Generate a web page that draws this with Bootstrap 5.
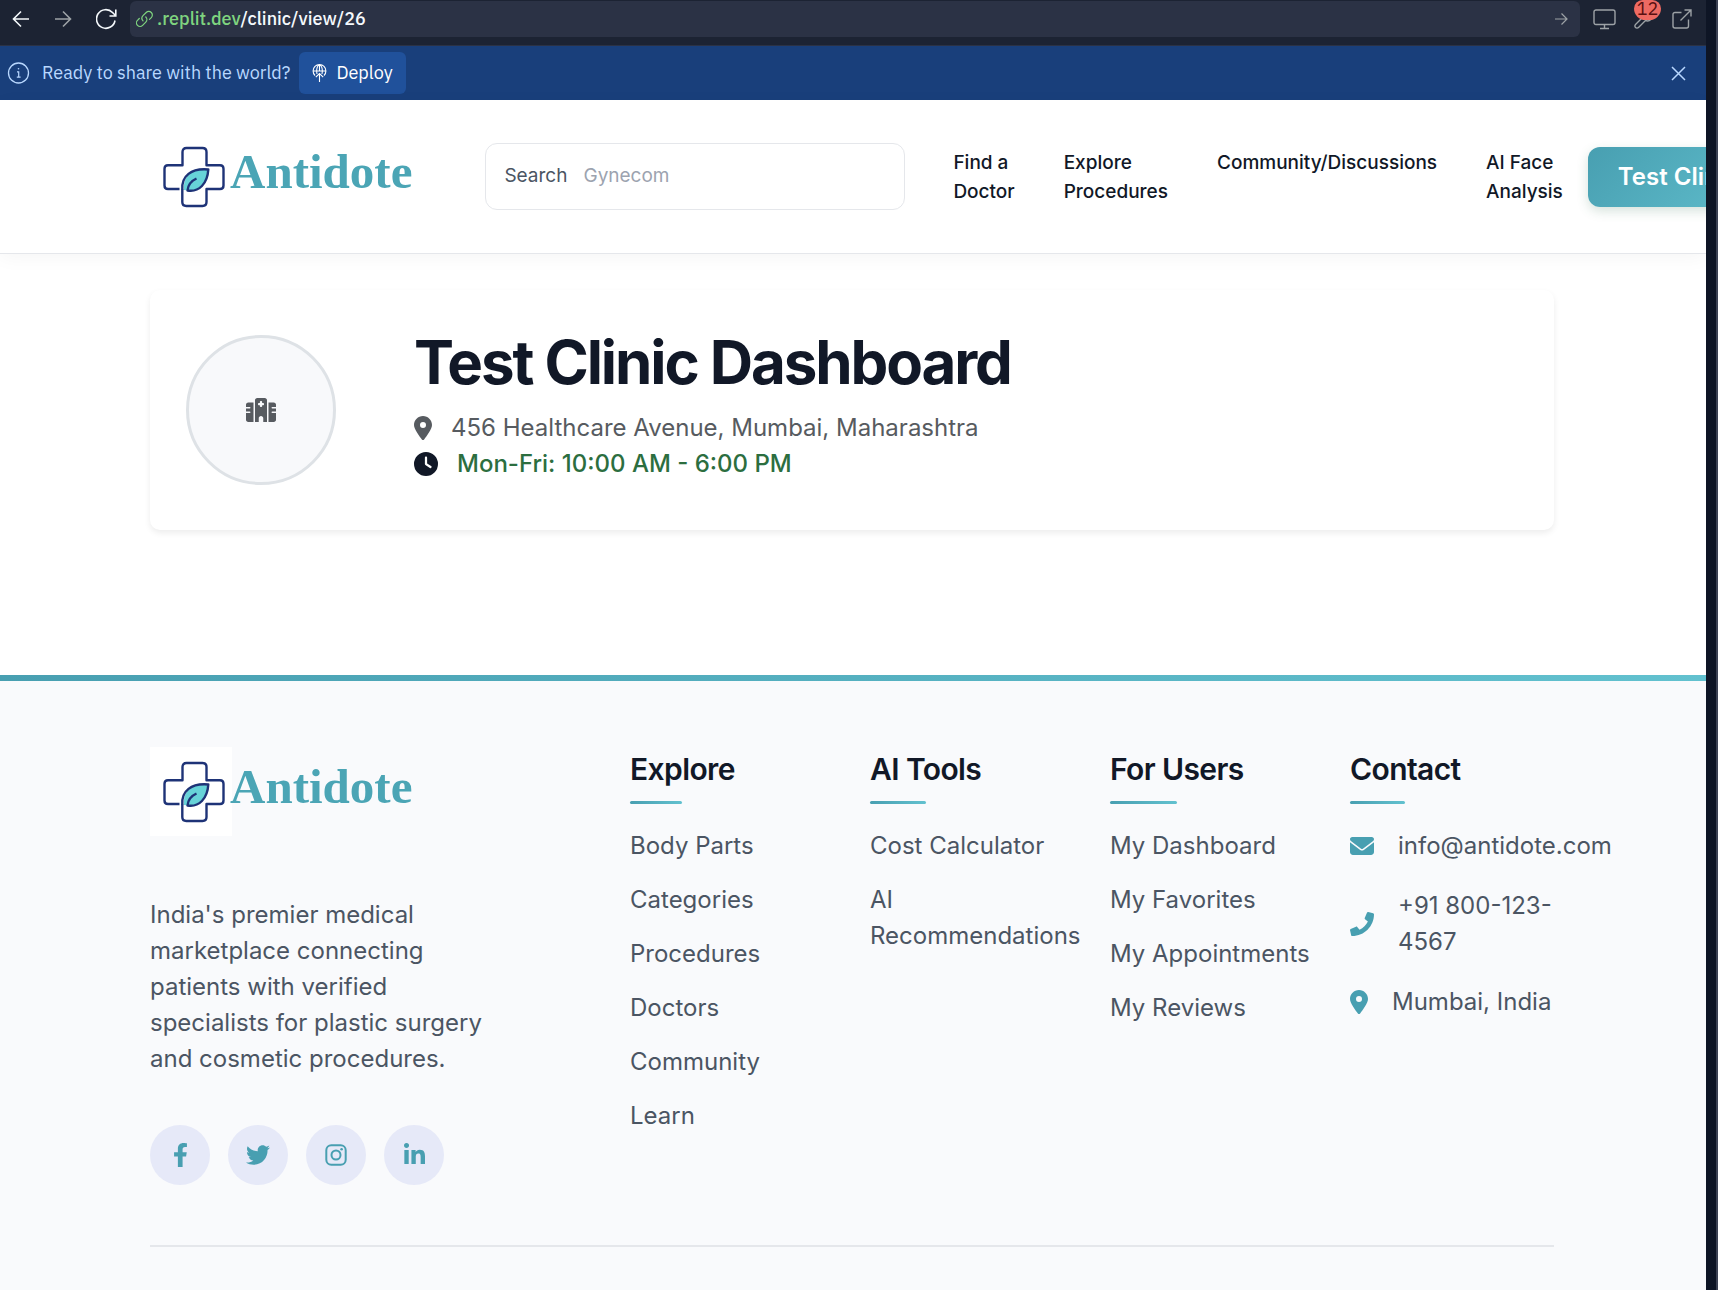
<!DOCTYPE html>
<html lang="en">
<head>
<meta charset="utf-8">
<meta name="viewport" content="width=device-width, initial-scale=1">
<title>Test Clinic Dashboard - Antidote</title>
<link href="https://cdn.jsdelivr.net/npm/bootstrap@5.3.0/dist/css/bootstrap.min.css" rel="stylesheet">
<style>
html{font-size:24px}
body{font-family:Inter,"Liberation Sans",sans-serif;color:#111827;background:#fff;line-height:1.5}
a{text-decoration:none;color:inherit}
svg{display:block;flex-shrink:0}
.pane{min-width:0;overflow-x:clip}
.edge{width:12px;background:#0e1525;border-right:2px solid #3c4254}
/* browser chrome */
.chrome-bar,.deploy-bar{font-family:"IBM Plex Sans","Noto Sans",sans-serif;font-size:18px;line-height:24px}
.chrome-bar{height:46px;background:#1c2333;border-bottom:1px solid #2b3245;padding:1px 14px 8px 12px;color:#f5f9fc}
.icon-btn{background:none;border:0;padding:0;color:inherit;position:relative;display:block}
.history-tools{gap:24px;padding-right:10px}
.page-tools{gap:18px;padding-left:13px}
.dim{color:#9da2a6}
.url-box{height:36px;background:#2b3245;border-radius:6px;padding:0 12px 0 6px;gap:4px;font-weight:500}
.url-host{color:#7fd47f}
.count-badge{position:absolute;left:0;top:-9px;width:27px;height:20px;border-radius:9px 9px 12px 12px;background:#ee6a62;color:#5a1010;font-size:18px;line-height:18px;text-align:center}
.deploy-bar{height:54px;background:#193f7b;color:#b9d8ff;padding:0 20px 0 7px}
.deploy-btn{height:42px;background:#20519b;color:#fff;border:0;border-radius:6px;padding:0 13px;gap:9px;margin-left:9px}
/* site */
.wrap-1440{max-width:1440px}
.site-head{background:#fff;border-bottom:1px solid #e5e7eb;padding:32px 2px 32px 0;box-shadow:0 4px 18px rgba(0,0,0,.04);overflow-x:clip}
.brand{height:89px}
.brand-name{font-family:"Liberation Serif",serif;font-weight:700;font-size:49px;line-height:60px;color:#4ba5b5;padding-bottom:9px;margin-left:-2px}
.brand-mark{background:#fff}
.find-box{width:420px;height:67px;border:1px solid #e5e7eb;border-radius:12px;padding:0 18px;margin-left:73px;font-size:19px;color:#4b5563;gap:16px}
.find-box input{border:0;outline:0;background:none;min-width:0;padding:0;color:#4b5563}
.find-box input::placeholder{color:#9ca3af;opacity:1}
.main-nav{font-size:19px;line-height:29px;font-weight:500;gap:49px;margin-left:48px;white-space:nowrap}
.account-btn{height:60px;border:0;border-radius:12px;background:linear-gradient(135deg,#489fb1,#62c1cf);color:#fff;font-weight:600;padding:0 60px 0 30px;margin-left:25px;box-shadow:0 4px 12px rgba(44,110,73,.2);white-space:nowrap;font-size:24px}
.site-main{padding:36px 2px 145px 0}
.clinic-card{border:0;border-radius:10px;box-shadow:0 3px 6px rgba(0,0,0,.075);background:#fff}
.clinic-photo{width:150px;height:150px;border-radius:50%;border:3px solid #dee2e6;background:#f8f9fb;color:#575b60}
.clinic-title{font-size:60px;line-height:72px;font-weight:700;letter-spacing:-.035em}
.info-line{gap:19px}
.addr{color:#575b60}
.hours{color:#2c6e3f;font-weight:500}
.rule-top{height:6px;background:linear-gradient(90deg,#489fb1,#62c1cf)}
.site-foot{background:#f9fafc;color:#4b5563;padding:66px 2px 36px 0}
.about{margin:61px 0 48px;padding-right:96px}
.social{gap:18px}
.social a{width:60px;height:60px;border-radius:50%;background:#e6e9f8;color:#489fb1}
.foot-title{display:inline-block;font-size:30px;line-height:45px;font-weight:600;letter-spacing:-.02em;color:#111827;padding-bottom:9px;margin-bottom:24px}
.foot-title::after{content:"";display:block;width:50%;height:3px;border-radius:2px;margin-top:9px;margin-bottom:-9px;background:linear-gradient(90deg,#489fb1,#62c1cf)}
.foot-list{gap:18px}
.foot-list.roomy{gap:24px}
.foot-list svg{color:#489fb1}
.foot-end{border-top:2px solid #e5e7eb;margin-top:60px}
</style>
<script src="https://cdn.jsdelivr.net/npm/bootstrap@5.3.0/dist/js/bootstrap.bundle.min.js"></script>
</head>
<body>
<svg width="0" height="0" class="position-absolute" aria-hidden="true">
  <symbol id="logo" viewBox="0 0 82 89">
    <g fill="none" stroke="#1e3377" stroke-width="2.4" stroke-linejoin="round">
      <path d="M29.5 57H18q-3.500 0-3.500-3.500V36.800q0-3.500 3.500-3.500H32.500V20q0-4 4-4H52.500q4 0 4 4V33.300H70q3.500 0 3.500 3.500V53.500q0 3.500-3.500 3.500H56.500V70q0 4-4 4H36.300q-4 0-4-4V57"/>
      <path stroke="none" fill="#67d3d8" d="M34 58C33 45 41 36 58.300 37.500C57 52 49 60 38 58.500Z"/>
      <path d="M32.300 57.500C31.500 44 41 36 58.300 37.500C57.500 51.500 49 60.500 37.500 58.500C38 53 41 49 46.500 46.500"/>
    </g>
  </symbol>
  <symbol id="pin" viewBox="0 0 384 512"><path fill="currentColor" d="M215.700 499.200C267 435 384 279.400 384 192C384 86 298 0 192 0S0 86 0 192c0 87.400 117 243 168.300 307.200c12.300 15.300 35.100 15.300 47.400 0zM192 128a64 64 0 1 1 0 128 64 64 0 1 1 0-128z"/></symbol>
</svg>
<div class="d-flex min-vh-100">
<div class="pane flex-grow-1 d-flex flex-column">

  <div class="chrome-bar d-flex align-items-center">
    <div class="history-tools d-flex align-items-center">
      <button class="icon-btn" aria-label="Back"><svg width="18" height="18" viewBox="0 0 18 18" fill="none" stroke="currentColor" stroke-width="1.600"><path d="M17 9H2M9 1.500 1.500 9 9 16.500"/></svg></button>
      <button class="icon-btn dim" aria-label="Forward"><svg width="18" height="18" viewBox="-1 0 18 18" fill="none" stroke="currentColor" stroke-width="1.600"><path d="M0 9h15M8 1.500 15.500 9 8 16.500"/></svg></button>
      <button class="icon-btn" aria-label="Reload"><svg width="24" height="22" viewBox="2 0 24 22" fill="none" stroke="currentColor" stroke-width="1.600"><path d="M21 12.500A9.300 9.300 0 1 1 18.500 4.500L21.500 7.500M21.800 1.500V8H15.500"/></svg></button>
    </div>
    <div class="url-box d-flex align-items-center flex-grow-1">
      <svg width="17" height="18" viewBox="0 0 17 18" fill="none" stroke="#7fd47f" stroke-width="1.200" stroke-linecap="round"><path d="M7 10.800A3.700 3.700 0 0 1 7 5.700L10.200 2.500A3.600 3.600 0 0 1 15.300 7.600L13.500 9.400M9.800 7A3.700 3.700 0 0 1 9.800 12.200L6.600 15.400A3.600 3.600 0 0 1 1.500 10.300L3.300 8.500"/></svg>
      <div class="flex-grow-1"><span class="url-host">.replit.dev</span>/clinic/view/26</div>
      <svg class="dim" width="14" height="14" viewBox="0 0 14 14" fill="none" stroke="currentColor" stroke-width="1.200"><path d="M1 7h12M7.500 1.500 13 7l-5.500 5.500"/></svg>
    </div>
    <div class="page-tools d-flex dim align-items-center">
      <button class="icon-btn" aria-label="Devices"><svg width="23" height="21" viewBox="0 0 23 21" fill="none" stroke="currentColor" stroke-width="1.400"><rect x="1" y="1" width="21" height="14.500" rx="2"/><path d="M11.500 15.500V19.500M7 19.500h9"/></svg></button>
      <button class="icon-btn" aria-label="Developer tools"><svg width="20" height="20" viewBox="0 0 20 20" fill="none" stroke="currentColor" stroke-width="1.400" stroke-linejoin="round"><path d="M8.500 8.500A5 5 0 0 1 15 2L12.500 5 15 7.500 18 5A5 5 0 0 1 11.500 11.500L4.500 18.500A2 2 0 0 1 1.500 15.500Z"/></svg><span class="count-badge">12</span></button>
      <button class="icon-btn" aria-label="Open in new tab"><svg width="20" height="20" viewBox="0 0 20 20" fill="none" stroke="currentColor" stroke-width="1.400"><path d="M9.500 3.500H3a2 2 0 0 0-2 2V17a2 2 0 0 0 2 2H14.500a2 2 0 0 0 2-2V10.500M8.500 11.500 19 1M12.500 1H19V7.500"/></svg></button>
    </div>
  </div>

  <div class="deploy-bar d-flex align-items-center">
    <svg width="23" height="22" viewBox="0 0 23 22" fill="none" stroke="currentColor" stroke-width="1.300"><circle cx="11.500" cy="11" r="10"/><path d="M10 9.800h1.700V15M9.800 15.200h3.800" stroke-width="1.200"/><circle cx="11.500" cy="6.800" r=".8" fill="currentColor" stroke="none"/></svg>
    <span class="ms-2 ps-0">Ready to share with the world?</span>
    <button class="deploy-btn d-flex align-items-center"><svg width="15" height="18" viewBox="0 0 15 18" fill="none" stroke="currentColor" stroke-width="1.100"><path d="M3 11.500A6.400 6.400 0 1 1 12 11.500M1 7H14M5 10C4 5 5.500 1 7.500 .8C9.500 1 11 5 10 10M7.500 1V7M7.500 18V9.500M3.800 13.200 7.500 9.500 11.200 13.200"/></svg>Deploy</button>
    <button class="icon-btn ms-auto" aria-label="Dismiss"><svg width="15" height="15" viewBox="0 0 15 15" fill="none" stroke="currentColor" stroke-width="1.500"><path d="M1 1 14 14M14 1 1 14"/></svg></button>
  </div>

  <header class="site-head">
    <div class="container-fluid wrap-1440 d-flex align-items-center flex-nowrap">
      <a href="#" class="brand d-flex align-items-center flex-shrink-0">
        <svg class="brand-mark" width="82" height="89"><use href="#logo"/></svg><span class="brand-name">Antidote</span>
      </a>
      <div class="find-box d-flex align-items-center flex-shrink-0">
        <label for="find">Search</label>
        <input id="find" class="flex-grow-1" type="text" placeholder="Gynecom">
      </div>
      <nav class="main-nav d-flex flex-shrink-0">
        <a href="#">Find a<br>Doctor</a>
        <a href="#">Explore<br>Procedures</a>
        <a href="#">Community/Discussions</a>
        <a href="#">AI Face<br>Analysis</a>
      </nav>
      <button class="account-btn flex-shrink-0">Test Clinic</button>
    </div>
  </header>

  <main class="site-main">
    <div class="container-fluid wrap-1440">
      <div class="card clinic-card">
        <div class="card-body p-4">
          <div class="row align-items-center">
            <div class="col-2">
              <div class="clinic-photo d-flex align-items-center justify-content-center">
                <svg width="30" height="24" viewBox="0 0 640 512"><path fill="currentColor" d="M192 48c0-26.500 21.500-48 48-48H400c26.500 0 48 21.500 48 48V512H368V432c0-26.500-21.500-48-48-48s-48 21.500-48 48v80H192V48zM48 96H160V512H48c-26.500 0-48-21.500-48-48V320H80c8.800 0 16-7.200 16-16s-7.200-16-16-16H0V224H80c8.800 0 16-7.200 16-16s-7.200-16-16-16H0V144c0-26.500 21.500-48 48-48zm544 0c26.500 0 48 21.500 48 48v48H560c-8.800 0-16 7.200-16 16s7.200 16 16 16h80v64H560c-8.800 0-16 7.200-16 16s7.200 16 16 16h80V464c0 26.500-21.500 48-48 48H480V96H592zM312 64c-8.800 0-16 7.200-16 16v24H272c-8.800 0-16 7.200-16 16v16c0 8.800 7.200 16 16 16h24v24c0 8.800 7.200 16 16 16h16c8.800 0 16-7.200 16-16V152h24c8.800 0 16-7.200 16-16V120c0-8.800-7.200-16-16-16H344V80c0-8.800-7.200-16-16-16H312z"/></svg>
              </div>
            </div>
            <div class="col">
              <h1 class="clinic-title mb-2">Test Clinic Dashboard</h1>
              <div class="info-line addr d-flex align-items-center"><svg width="18" height="24"><use href="#pin"/></svg>456 Healthcare Avenue, Mumbai, Maharashtra</div>
              <div class="info-line d-flex align-items-center mb-2"><svg width="24" height="24" viewBox="0 0 512 512"><path fill="currentColor" d="M256 0a256 256 0 1 1 0 512A256 256 0 1 1 256 0zM232 120V256c0 8 4 15.500 10.700 20l96 64c11 7.400 25.900 4.400 33.300-6.700s4.400-25.900-6.700-33.300L280 243.200V120c0-13.300-10.700-24-24-24s-24 10.700-24 24z"/></svg><span class="hours">Mon-Fri: 10:00 AM - 6:00 PM</span></div>
            </div>
          </div>
        </div>
      </div>
    </div>
  </main>

  <div class="rule-top"></div>
  <footer class="site-foot flex-grow-1">
    <div class="container-fluid wrap-1440">
      <div class="row">
        <div class="col-4">
          <a href="#" class="brand d-flex align-items-center">
            <svg class="brand-mark" width="82" height="89"><use href="#logo"/></svg><span class="brand-name">Antidote</span>
          </a>
          <p class="about">India's premier medical marketplace connecting patients with verified specialists for plastic surgery and cosmetic procedures.</p>
          <div class="social d-flex">
            <a href="#" class="d-flex align-items-center justify-content-center" aria-label="Facebook"><svg width="15" height="24" viewBox="0 0 320 512"><path fill="currentColor" d="M279.140 288l14.220-92.660h-88.910v-60.130c0-25.350 12.420-50.060 52.240-50.060h40.420V6.260S260.430 0 225.360 0c-73.220 0-121.080 44.380-121.080 124.720v70.620H22.890V288h81.390v224h100.170V288z"/></svg></a>
            <a href="#" class="d-flex align-items-center justify-content-center" aria-label="Twitter"><svg width="24" height="24" viewBox="0 0 512 512"><path fill="currentColor" d="M459.370 151.716c.325 4.548.325 9.097.325 13.645 0 138.720-105.583 298.558-298.558 298.558-59.452 0-114.680-17.219-161.137-47.106 8.447.974 16.568 1.299 25.340 1.299 49.055 0 94.213-16.568 130.274-44.832-46.132-.975-84.792-31.188-98.112-72.772 6.498.974 12.995 1.624 19.818 1.624 9.421 0 18.843-1.300 27.614-3.573-48.081-9.747-84.143-51.980-84.143-102.985v-1.299c13.969 7.797 30.214 12.670 47.431 13.319-28.264-18.843-46.781-51.005-46.781-87.391 0-19.492 5.197-37.360 14.294-52.954 51.655 63.675 129.300 105.258 216.365 109.807-1.624-7.797-2.599-15.918-2.599-24.040 0-57.828 46.782-104.934 104.934-104.934 30.213 0 57.502 12.670 76.670 33.137 23.715-4.548 46.456-13.320 66.599-25.340-7.798 24.366-24.366 44.833-46.132 57.827 21.117-2.273 41.584-8.122 60.426-16.243-14.292 20.791-32.161 39.308-52.628 54.253z"/></svg></a>
            <a href="#" class="d-flex align-items-center justify-content-center" aria-label="Instagram"><svg width="22" height="22" viewBox="0 0 22 22" fill="none" stroke="currentColor" stroke-width="2"><rect x="1.300" y="1.300" width="19.400" height="19.400" rx="5"/><circle cx="11" cy="11" r="4.500"/><circle cx="16.600" cy="5.300" r="1.300" fill="currentColor" stroke="none"/></svg></a>
            <a href="#" class="d-flex align-items-center justify-content-center" aria-label="LinkedIn"><svg width="21" height="24" viewBox="0 0 448 512"><path fill="currentColor" d="M100.280 448H7.400V148.900h92.880zM53.790 108.100C24.090 108.100 0 83.500 0 53.800a53.790 53.790 0 0 1 107.580 0c0 29.700-24.100 54.300-53.790 54.300zM447.900 448h-92.680V302.400c0-34.700-.7-79.200-48.290-79.200-48.290 0-55.690 37.700-55.690 76.700V448h-92.780V148.900h89.080v40.800h1.300c12.400-23.500 42.690-48.300 87.880-48.300 94 0 111.280 61.900 111.280 142.300V448z"/></svg></a>
          </div>
        </div>
        <div class="col-2">
          <h2 class="foot-title">Explore</h2>
          <ul class="foot-list list-unstyled d-flex flex-column mb-0">
            <li><a href="#">Body Parts</a></li><li><a href="#">Categories</a></li><li><a href="#">Procedures</a></li><li><a href="#">Doctors</a></li><li><a href="#">Community</a></li><li><a href="#">Learn</a></li>
          </ul>
        </div>
        <div class="col-2">
          <h2 class="foot-title">AI Tools</h2>
          <ul class="foot-list list-unstyled d-flex flex-column mb-0">
            <li><a href="#">Cost Calculator</a></li><li><a href="#">AI Recommendations</a></li>
          </ul>
        </div>
        <div class="col-2">
          <h2 class="foot-title">For Users</h2>
          <ul class="foot-list list-unstyled d-flex flex-column mb-0">
            <li><a href="#">My Dashboard</a></li><li><a href="#">My Favorites</a></li><li><a href="#">My Appointments</a></li><li><a href="#">My Reviews</a></li>
          </ul>
        </div>
        <div class="col-2">
          <h2 class="foot-title">Contact</h2>
          <ul class="foot-list roomy list-unstyled d-flex flex-column mb-0">
            <li class="d-flex align-items-center gap-3"><svg width="24" height="24" viewBox="0 0 512 512"><path fill="currentColor" d="M48 64C21.500 64 0 85.500 0 112c0 15.100 7.100 29.300 19.200 38.400L236.800 313.600c11.400 8.500 27 8.500 38.400 0L492.800 150.400c12.100-9.100 19.200-23.300 19.200-38.400c0-26.500-21.500-48-48-48H48zM0 176V384c0 35.300 28.700 64 64 64H448c35.300 0 64-28.700 64-64V176L294.400 339.200c-22.800 17.100-54 17.100-76.800 0L0 176z"/></svg><a href="#">info@antidote.com</a></li>
            <li class="d-flex align-items-center gap-3"><svg width="24" height="24" viewBox="0 0 512 512"><path fill="currentColor" d="M493.400 24.600l-104-24c-11.300-2.600-22.900 3.300-27.500 13.900l-48 112c-4.200 9.800-1.400 21.300 6.900 28l60.600 49.600c-36 76.700-98.900 140.500-177.200 177.200l-49.600-60.600c-6.800-8.300-18.200-11.100-28-6.900l-112 48C3.900 366.500-2 378.100.6 389.400l24 104C27.100 504.200 36.700 512 48 512c256.100 0 464-207.500 464-464 0-11.200-7.700-20.900-18.600-23.400z"/></svg><a href="#">+91 800-123-4567</a></li>
            <li class="d-flex align-items-center gap-3"><svg width="18" height="24"><use href="#pin"/></svg><span class="text-nowrap">Mumbai, India</span></li>
          </ul>
        </div>
      </div>
      <div class="foot-end"></div>
    </div>
  </footer>
</div>
<div class="edge flex-shrink-0"></div>
</div>
</body>
</html>
